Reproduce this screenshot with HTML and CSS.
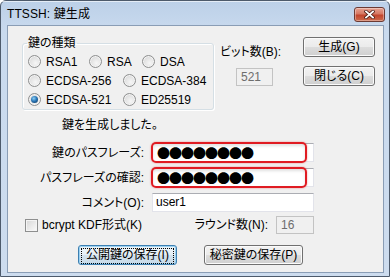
FILE: index.html
```html
<!DOCTYPE html>
<html lang="ja">

<head>
  <meta charset="UTF-8">
  <meta name="viewport" content="width=device-width, initial-scale=1.0">
  <title>TTSSH: 鍵生成</title>
  <link rel="stylesheet" href="styles.css">
</head>

<body>
  <div class="window">
    <!-- タイトルバー -->
    <div class="titlebar">
      <span class="title">TTSSH: 鍵生成</span>
      <button class="btn-close" type="button" aria-label="閉じる">
        <svg width="11" height="9" viewBox="0 0 11 9">
          <path d="M2 1.5 L9 7.5 M9 1.5 L2 7.5" stroke="#4a1a14" stroke-width="3.4" stroke-linecap="square" />
          <path d="M2 1.5 L9 7.5 M9 1.5 L2 7.5" stroke="#fff" stroke-width="1.8" stroke-linecap="square" />
        </svg>
      </button>
    </div>

    <div class="client">
      <div class="top">
        <!-- 鍵の種類 -->
        <fieldset class="keytype">
          <legend>鍵の種類</legend>
          <div class="radio-row">
            <label class="radio w61"><span class="radio-mark"></span>RSA1</label>
            <label class="radio w53"><span class="radio-mark"></span>RSA</label>
            <label class="radio"><span class="radio-mark"></span>DSA</label>
          </div>
          <div class="radio-row">
            <label class="radio w95"><span class="radio-mark"></span>ECDSA-256</label>
            <label class="radio"><span class="radio-mark"></span>ECDSA-384</label>
          </div>
          <div class="radio-row">
            <label class="radio w95"><span class="radio-mark on"></span>ECDSA-521</label>
            <label class="radio"><span class="radio-mark"></span>ED25519</label>
          </div>
        </fieldset>

        <div class="bits">
          <span class="bits-label">ビット数(B):</span>
          <span class="field disabled bits-field">521</span>
        </div>

        <div class="actions">
          <button class="btn" type="button">生成(G)</button>
          <button class="btn" type="button">閉じる(C)</button>
        </div>
      </div>

      <p class="message">鍵を生成しました。</p>

      <!-- パスフレーズ -->
      <div class="form">
        <span class="form-label">鍵のパスフレーズ:</span>
        <span class="field pass marked">●●●●●●●●</span>
        <span class="form-label">パスフレーズの確認:</span>
        <span class="field pass marked">●●●●●●●●</span>
        <span class="form-label">コメント(O):</span>
        <span class="field">user1</span>
      </div>

      <div class="options">
        <label class="check"><span class="check-mark"></span>bcrypt KDF形式(K)</label>
        <span class="round-label">ラウンド数(N):</span>
        <span class="field disabled round-field">16</span>
      </div>

      <div class="buttons">
        <button class="btn btn-save focus" type="button"><span>公開鍵の保存(I)</span></button>
        <button class="btn btn-save" type="button">秘密鍵の保存(P)</button>
      </div>
    </div>
  </div>
</body>

</html>
```
FILE: styles.css
```css
html,
body {
  margin: 0;
  padding: 0;
  background: #fff;
}

body {
  font-family: "Liberation Sans", "Noto Sans CJK JP", sans-serif;
  font-size: 12px;
  line-height: 12px;
  color: #000;
  font-feature-settings: "palt";
}

button {
  font: inherit;
  color: inherit;
  cursor: pointer;
  padding: 0;
}

/* ウィンドウ枠 */
.window {
  width: 390px;
  height: 277px;
  box-sizing: border-box;
  border: 1px solid #4d5a6b;
  border-radius: 6px 6px 0 0;
  padding: 0 5px 3px 6px;
  background: linear-gradient(#bcd0e8, #c9daee 30px, #cddcee);
  display: flex;
  flex-direction: column;
}

.titlebar {
  height: 24px;
  display: flex;
  align-items: flex-start;
  box-shadow: inset 0 1px 0 rgba(255, 255, 255, 0.6);
  margin: 0 -5px 0 -6px;
}

.title {
  margin: 7px 0 0 6px;
  font-size: 12px;
  letter-spacing: 0.1px;
}

/* 閉じるボタン */
.btn-close {
  margin: 6px 4px 0 auto;
  width: 31px;
  height: 15px;
  border: 1px solid #6c3a33;
  border-radius: 3px;
  background: linear-gradient(#e7a392, #d67863 45%, #c2452d 55%, #cc6a4c);
  box-shadow: inset 0 0 0 1px rgba(255, 255, 255, 0.35);
  display: flex;
  align-items: center;
  justify-content: center;
}

.client {
  flex: 1;
  border: 1px solid #8a9db5;
  background: #f0f0f0;
  display: flex;
  flex-direction: column;
}

.top {
  display: flex;
  align-items: flex-start;
  height: 84px;
}

/* 鍵の種類 */
.keytype {
  margin: 11px 0 0 14px;
  width: 192px;
  box-sizing: border-box;
  padding: 3px 0 0 5px;
  border: 1px solid #d5dfe5;
  border-radius: 3px;
  box-shadow: inset 1px 1px 0 #fff, 1px 1px 0 #fff;
}

.keytype legend {
  padding: 0 1px;
  margin-left: -1px;
  line-height: 12px;
}

.radio-row {
  height: 19px;
  display: flex;
  align-items: center;
}

.radio {
  display: flex;
  align-items: center;
  gap: 5px;
  white-space: nowrap;
}

.w61 {
  width: 61px;
}

.w53 {
  width: 53px;
}

.w95 {
  width: 95px;
}

.radio-mark {
  width: 11px;
  height: 11px;
  border: 1px solid #8e8f8f;
  border-radius: 50%;
  background: radial-gradient(circle at 60% 65%, #f6f6f6 0, #e6e6e6 45%, #cfcfcf 100%);
  box-shadow: inset 0 0 0 1px #f4f4f4;
  flex: none;
  position: relative;
}

.radio-mark.on::after {
  content: "";
  position: absolute;
  left: 2px;
  top: 2px;
  width: 7px;
  height: 7px;
  border-radius: 50%;
  background: radial-gradient(circle at 40% 35%, #8fd0f5 0, #2a77b8 45%, #0c2f52 100%);
}

/* ビット数 */
.bits {
  margin-left: 6px;
  padding-top: 20px;
  display: flex;
  flex-direction: column;
}

.bits-field {
  margin: 10px 0 0 16px;
  width: 37px;
}

.actions {
  margin: 11px 8px 0 auto;
  display: flex;
  flex-direction: column;
  gap: 9px;
}

.actions .btn {
  width: 72px;
}

/* ボタン */
.btn {
  height: 20px;
  box-sizing: border-box;
  border: 1px solid #707070;
  border-radius: 3px;
  background: linear-gradient(#f2f2f2, #ebebeb 50%, #dddddd 50%, #cfcfcf);
  box-shadow: inset 0 0 0 1px #fbfbfb;
  line-height: 16px;
}

.btn.focus {
  border-color: #3c7fb1;
  background: linear-gradient(#eef5fa, #e4eef5 50%, #d4e3ee 50%, #c6d9e7);
  box-shadow: inset 0 0 0 1px #9bd1f2;
  padding: 2px;
}

.btn.focus span {
  display: block;
  height: 14px;
  line-height: 13px;
  border: 1px dotted #000;
}

/* 入力欄 */
.field {
  display: block;
  height: 19px;
  box-sizing: border-box;
  border: 1px solid #e2e3ea;
  border-top-color: #abadb3;
  background: #fff;
  padding: 0 3px;
  line-height: 17px;
  white-space: nowrap;
}

.field.disabled {
  background: #f0f0f0;
  border-color: #c3c3c3;
  color: #6d6d6d;
  height: 18px;
  line-height: 16px;
  padding: 0 4px;
}

.message {
  margin: 9px 0 0 54px;
  line-height: 12px;
}

.form {
  margin-top: 12px;
  display: grid;
  grid-template-columns: 136px 162px;
  column-gap: 8px;
  row-gap: 6px;
  align-items: center;
}

.form-label {
  text-align: right;
  white-space: nowrap;
}

.pass {
  position: relative;
  font-family: "Noto Sans CJK JP", sans-serif;
  font-size: 13px;
  letter-spacing: -1px;
  padding-left: 4px;
  line-height: 17px;
}

/* 赤い強調枠 */
.marked::after {
  content: "";
  position: absolute;
  left: -2px;
  top: -2px;
  right: 6px;
  bottom: -2px;
  border: 2px solid #e01b22;
  border-radius: 5px;
  box-shadow: 0 0 2px rgba(220, 0, 0, 0.45), inset 0 2px 3px rgba(0, 0, 0, 0.12);
}

.options {
  margin-top: 3px;
  height: 20px;
  display: flex;
  align-items: center;
}

.check {
  margin-left: 17px;
  display: flex;
  align-items: center;
  gap: 4px;
  flex: 1;
}

.check-mark {
  width: 11px;
  height: 11px;
  border: 1px solid #8e8f8f;
  background: linear-gradient(135deg, #d6d6d6, #f0f0f0 70%, #fbfbfb);
  box-shadow: inset 0 0 0 1px #f4f4f4;
}

.round-field {
  margin: 0 69px 0 8px;
  width: 38px;
  height: 20px;
  line-height: 18px;
}

.buttons {
  margin-top: 10px;
  display: flex;
  gap: 27px;
  padding-left: 70px;
}

.btn-save {
  width: 99px;
}
```
